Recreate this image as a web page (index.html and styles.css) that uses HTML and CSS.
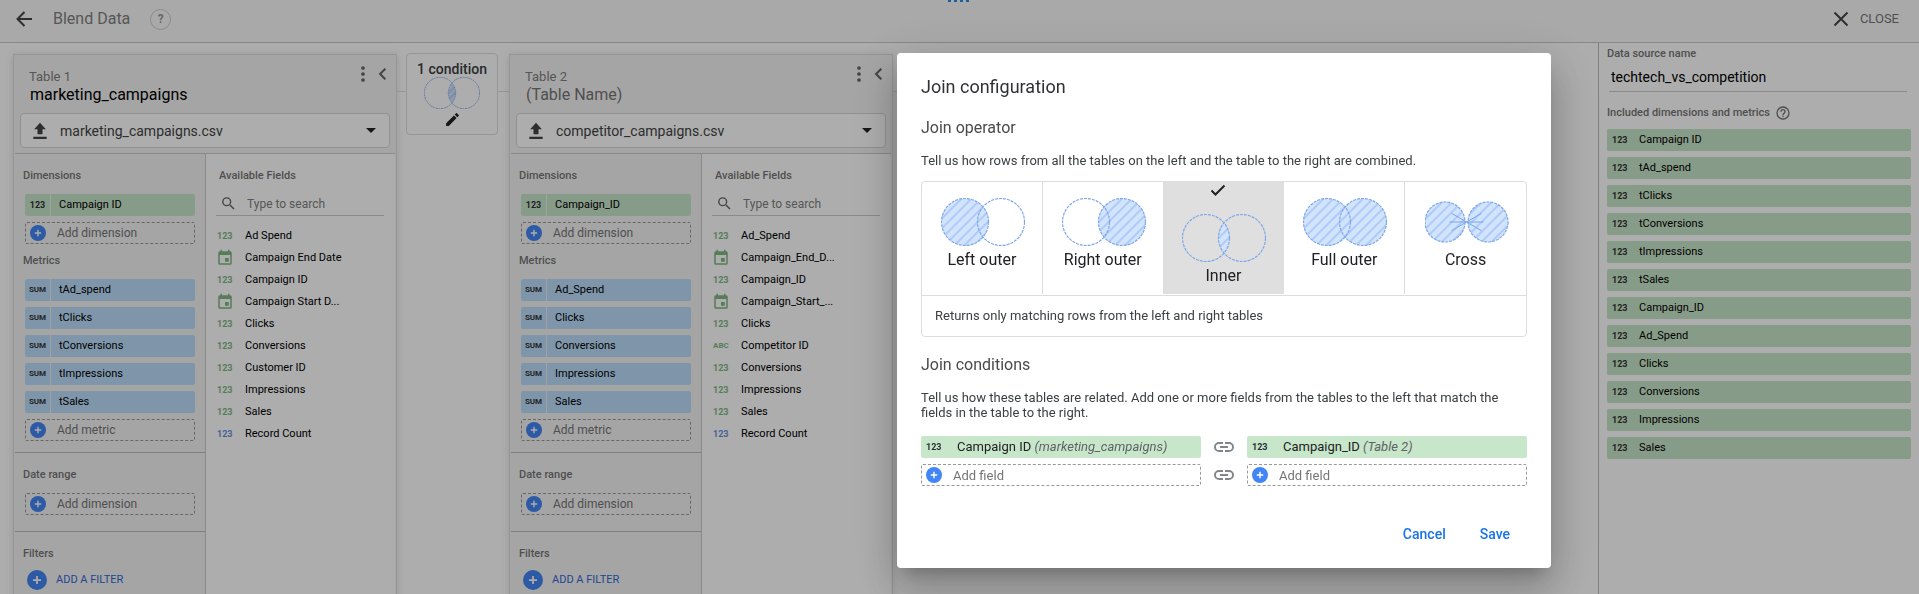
FILE: index.html
```
<!DOCTYPE html>
<html lang="en">
<head>
<meta charset="utf-8">
<meta name="viewport" content="width=device-width, initial-scale=1">
<title>Blend Data</title>
<link rel="stylesheet" href="styles.css">
</head>
<body>
<svg class="defs" aria-hidden="true">
  <defs>
    <pattern id="hatch" width="7" height="7" patternUnits="userSpaceOnUse" patternTransform="rotate(45)">
      <rect width="7" height="7" fill="#d2e3fc"/><rect width="2" height="7" fill="#aecbfa"/>
    </pattern>
    <clipPath id="lens"><circle cx="24" cy="24" r="23"/></clipPath>
    <symbol id="i-upload" viewBox="0 0 24 24"><path d="M9 16h6v-6h4l-7-8-7 8h4zM4 19h16v2.500H4z"/></symbol>
    <symbol id="i-more" viewBox="0 0 24 24"><circle cx="12" cy="3" r="2.800"/><circle cx="12" cy="12" r="2.800"/><circle cx="12" cy="21" r="2.800"/></symbol>
    <symbol id="i-chev" viewBox="0 0 24 24"><path d="M16 3 7 12l9 9" fill="none" stroke="currentColor" stroke-width="3.500"/></symbol>
    <symbol id="i-search" viewBox="0 0 24 24"><path d="M15.500 14h-.79l-.28-.27A6.470 6.470 0 0 0 16 9.500 6.500 6.500 0 1 0 9.500 16c1.610 0 3.090-.59 4.230-1.570l.27.28v.79l5 4.990L20.490 19zm-6 0a4.500 4.500 0 1 1 0-9 4.500 4.500 0 0 1 0 9z"/></symbol>
    <symbol id="i-event" viewBox="0 0 24 24"><path d="M17 12h-5v5h5zM16 1v2H8V1H6v2H5a2 2 0 0 0-2 2v14a2 2 0 0 0 2 2h14a2 2 0 0 0 2-2V5a2 2 0 0 0-2-2h-1V1zm3 18H5V8h14z"/></symbol>
    <symbol id="i-link" viewBox="0 0 24 24"><path d="M3.900 12A3.100 3.100 0 0 1 7 8.900h4V7H7a5 5 0 0 0 0 10h4v-1.900H7A3.100 3.100 0 0 1 3.900 12zM8 13h8v-2H8zm9-6h-4v1.900h4a3.100 3.100 0 0 1 0 6.200h-4V17h4a5 5 0 0 0 0-10z"/></symbol>
    <symbol id="i-edit" viewBox="0 0 24 24"><path d="M3 17.250V21h3.750L17.810 9.940l-3.750-3.750zM20.710 7.040a1 1 0 0 0 0-1.410l-2.340-2.340a1 1 0 0 0-1.410 0l-1.830 1.830 3.750 3.750z"/></symbol>
    <symbol id="i-plus" viewBox="0 0 16 16"><circle cx="8" cy="8" r="8" fill="#4285f4"/><path d="M8 4.800v6.400M4.800 8h6.400" stroke="#fff" stroke-width="1.400"/></symbol>
    <symbol id="v-inner" viewBox="0 0 84 48"><circle cx="60" cy="24" r="23" fill="url(#hatch)" clip-path="url(#lens)"/><g class="ring"><circle cx="24" cy="24" r="23.500"/><circle cx="60" cy="24" r="23.500"/></g></symbol>
  </defs>
</svg>

<header class="topbar">
  <button class="icon-btn" aria-label="Back"><svg class="back" viewBox="0 0 16 16"><path d="M16 8H1.500M8.500 1 1.500 8l7 7"/></svg></button>
  <h1>Blend Data</h1>
  <button class="help" aria-label="Help">?</button>
  <span class="dots" aria-hidden="true"><i></i><i></i><i></i><i></i></span>
  <button class="close"><svg viewBox="0 0 16 16"><path d="m1.500 1.500 13 13m0-13-13 13"/></svg>CLOSE</button>
</header>

<div class="body">
<main class="workspace">
  <section class="panel">
    <div class="panel-head">
      <div class="title">
        <label for="t1">Table 1</label>
        <input id="t1" class="name" value="marketing_campaigns">
      </div>
      <button class="icon-btn" aria-label="More"><svg class="more"><use href="#i-more"/></svg></button>
      <button class="icon-btn" aria-label="Collapse"><svg class="chev"><use href="#i-chev"/></svg></button>
    </div>
    <div class="source"><svg><use href="#i-upload"/></svg><select aria-label="Data source"><option>marketing_campaigns.csv</option></select></div>
    <div class="cols">
      <div class="used">
        <div class="group">
          <h2>Dimensions</h2>
          <button class="chip dim"><b>123</b><span>Campaign ID</span></button>
          <button class="add"><svg><use href="#i-plus"/></svg>Add dimension</button>
          <h2 class="second">Metrics</h2>
          <button class="chip met"><b>SUM</b><span>tAd_spend</span></button>
          <button class="chip met"><b>SUM</b><span>tClicks</span></button>
          <button class="chip met"><b>SUM</b><span>tConversions</span></button>
          <button class="chip met"><b>SUM</b><span>tImpressions</span></button>
          <button class="chip met"><b>SUM</b><span>tSales</span></button>
          <button class="add"><svg><use href="#i-plus"/></svg>Add metric</button>
        </div>
        <div class="group date">
          <h2>Date range</h2>
          <button class="add"><svg><use href="#i-plus"/></svg>Add dimension</button>
        </div>
        <div class="group">
          <h2>Filters</h2>
          <button class="filter"><svg><use href="#i-plus"/></svg>ADD A FILTER</button>
        </div>
      </div>
      <div class="available">
        <h2>Available Fields</h2>
        <div class="search"><svg><use href="#i-search"/></svg><input aria-label="Search fields" placeholder="Type to search"></div>
        <ul>
          <li><b>123</b><span>Ad Spend</span></li>
          <li><svg><use href="#i-event"/></svg><span>Campaign End Date</span></li>
          <li><b>123</b><span>Campaign ID</span></li>
          <li><svg><use href="#i-event"/></svg><span>Campaign Start D...</span></li>
          <li><b>123</b><span>Clicks</span></li>
          <li><b>123</b><span>Conversions</span></li>
          <li><b>123</b><span>Customer ID</span></li>
          <li><b>123</b><span>Impressions</span></li>
          <li><b>123</b><span>Sales</span></li>
          <li class="count"><b>123</b><span>Record Count</span></li>
        </ul>
      </div>
    </div>
  </section>

  <div class="joint"><button class="join-card">1 condition<svg class="venn"><use href="#v-inner"/></svg><svg class="edit"><use href="#i-edit"/></svg></button></div>

  <section class="panel">
    <div class="panel-head">
      <div class="title">
        <label for="t2">Table 2</label>
        <input id="t2" class="name" placeholder="(Table Name)">
      </div>
      <button class="icon-btn" aria-label="More"><svg class="more"><use href="#i-more"/></svg></button>
      <button class="icon-btn" aria-label="Collapse"><svg class="chev"><use href="#i-chev"/></svg></button>
    </div>
    <div class="source"><svg><use href="#i-upload"/></svg><select aria-label="Data source"><option>competitor_campaigns.csv</option></select></div>
    <div class="cols">
      <div class="used">
        <div class="group">
          <h2>Dimensions</h2>
          <button class="chip dim"><b>123</b><span>Campaign_ID</span></button>
          <button class="add"><svg><use href="#i-plus"/></svg>Add dimension</button>
          <h2 class="second">Metrics</h2>
          <button class="chip met"><b>SUM</b><span>Ad_Spend</span></button>
          <button class="chip met"><b>SUM</b><span>Clicks</span></button>
          <button class="chip met"><b>SUM</b><span>Conversions</span></button>
          <button class="chip met"><b>SUM</b><span>Impressions</span></button>
          <button class="chip met"><b>SUM</b><span>Sales</span></button>
          <button class="add"><svg><use href="#i-plus"/></svg>Add metric</button>
        </div>
        <div class="group date">
          <h2>Date range</h2>
          <button class="add"><svg><use href="#i-plus"/></svg>Add dimension</button>
        </div>
        <div class="group">
          <h2>Filters</h2>
          <button class="filter"><svg><use href="#i-plus"/></svg>ADD A FILTER</button>
        </div>
      </div>
      <div class="available">
        <h2>Available Fields</h2>
        <div class="search"><svg><use href="#i-search"/></svg><input aria-label="Search fields" placeholder="Type to search"></div>
        <ul>
          <li><b>123</b><span>Ad_Spend</span></li>
          <li><svg><use href="#i-event"/></svg><span>Campaign_End_D...</span></li>
          <li><b>123</b><span>Campaign_ID</span></li>
          <li><svg><use href="#i-event"/></svg><span>Campaign_Start_...</span></li>
          <li><b>123</b><span>Clicks</span></li>
          <li class="text"><b>ABC</b><span>Competitor ID</span></li>
          <li><b>123</b><span>Conversions</span></li>
          <li><b>123</b><span>Impressions</span></li>
          <li><b>123</b><span>Sales</span></li>
          <li class="count"><b>123</b><span>Record Count</span></li>
        </ul>
      </div>
    </div>
  </section>
  <div class="joint"></div>
</main>

<aside class="sidebar">
  <label for="dsn">Data source name</label>
  <input id="dsn" value="techtech_vs_competition">
  <h2>Included dimensions and metrics <svg viewBox="0 0 24 24"><path d="M11 18h2v-2h-2zm1-16a10 10 0 1 0 0 20 10 10 0 0 0 0-20zm0 18a8 8 0 1 1 0-16 8 8 0 0 1 0 16zm0-14a4 4 0 0 0-4 4h2a2 2 0 1 1 4 0c0 2-3 1.750-3 5h2c0-2.250 3-2.500 3-5a4 4 0 0 0-4-4z"/></svg></h2>
  <ul>
    <li><b>123</b>Campaign ID</li>
    <li><b>123</b>tAd_spend</li>
    <li><b>123</b>tClicks</li>
    <li><b>123</b>tConversions</li>
    <li><b>123</b>tImpressions</li>
    <li><b>123</b>tSales</li>
    <li><b>123</b>Campaign_ID</li>
    <li><b>123</b>Ad_Spend</li>
    <li><b>123</b>Clicks</li>
    <li><b>123</b>Conversions</li>
    <li><b>123</b>Impressions</li>
    <li><b>123</b>Sales</li>
  </ul>
</aside>
</div>

<div class="scrim">
<div class="dialog" role="dialog" aria-modal="true" aria-labelledby="dlg">
  <h2 id="dlg">Join configuration</h2>
  <h3>Join operator</h3>
  <p>Tell us how rows from all the tables on the left and the table to the right are combined.</p>
  <fieldset class="operators" aria-label="Join operator">
    <div class="options">
      <label><input type="radio" name="op"><svg class="venn" viewBox="0 0 84 48"><circle cx="24" cy="24" r="23.500" fill="url(#hatch)"/><g class="ring"><circle cx="24" cy="24" r="23.500"/><circle cx="60" cy="24" r="23.500"/></g></svg>Left outer</label>
      <label><input type="radio" name="op"><svg class="venn" viewBox="0 0 84 48"><circle cx="60" cy="24" r="23.500" fill="url(#hatch)"/><g class="ring"><circle cx="24" cy="24" r="23.500"/><circle cx="60" cy="24" r="23.500"/></g></svg>Right outer</label>
      <label class="on"><input type="radio" name="op" checked><svg class="check" viewBox="0 0 16 16"><path d="m1.500 8.500 4 4 9-9"/></svg><svg class="venn"><use href="#v-inner"/></svg>Inner</label>
      <label><input type="radio" name="op"><svg class="venn" viewBox="0 0 84 48"><g fill="url(#hatch)"><circle cx="24" cy="24" r="23.500"/><circle cx="60" cy="24" r="23.500"/></g><g class="ring"><circle cx="24" cy="24" r="23.500"/><circle cx="60" cy="24" r="23.500"/></g></svg>Full outer</label>
      <label><input type="radio" name="op"><svg class="venn" viewBox="0 0 84 48"><g fill="url(#hatch)"><circle cx="20" cy="24" r="20"/><circle cx="63" cy="24" r="20"/></g><g class="ring"><circle cx="20" cy="24" r="20"/><circle cx="63" cy="24" r="20"/></g><path d="M24.500 24h34M26.500 15.300l30 17.400M56.500 15.300l-30 17.400" stroke="#7da7e8" fill="none"/></svg>Cross</label>
    </div>
    <p class="explain">Returns only matching rows from the left and right tables</p>
  </fieldset>
  <h3>Join conditions</h3>
  <p>Tell us how these tables are related. Add one or more fields from the tables to the left that match the fields in the table to the right.</p>
  <div class="conditions">
    <button class="field"><b>123</b><span>Campaign ID <em>(marketing_campaigns)</em></span></button>
    <svg class="link"><use href="#i-link"/></svg>
    <button class="field"><b>123</b><span>Campaign_ID <em>(Table 2)</em></span></button>
    <button class="add"><svg><use href="#i-plus"/></svg>Add field</button>
    <svg class="link"><use href="#i-link"/></svg>
    <button class="add"><svg><use href="#i-plus"/></svg>Add field</button>
  </div>
  <div class="actions"><button>Cancel</button><button>Save</button></div>
</div>
</div>
</body>
</html>
```
FILE: styles.css
```
* { box-sizing: border-box; }
body { margin: 0; height: 100vh; overflow: hidden; display: flex; flex-direction: column; font: 12px/16px Roboto, sans-serif; color: #000; background: #fff; }
h1, h2, h3, p, ul, fieldset { margin: 0; padding: 0; border: 0; font-weight: 400; list-style: none; min-width: 0; }
button, input, select { font: inherit; color: inherit; background: none; border: 0; padding: 0; margin: 0; outline: 0; }
svg { display: block; flex: none; fill: currentColor; }
.defs { position: absolute; width: 0; height: 0; }
h2 { font-size: 11px; line-height: 16px; font-weight: 500; color: #757575; }

.topbar { position: relative; flex: none; display: flex; align-items: center; height: 43px; padding: 0 20px 4px 16px; border-bottom: 1px solid #c8c8c8; background: #fafafa; }
.topbar h1 { margin-left: 21px; font-size: 16px; color: #808080; }
.back { width: 16px; height: 16px; fill: none; stroke: #444; stroke-width: 2; }
.help { width: 21px; height: 21px; margin-left: 20px; border: 1px solid #ccc; border-radius: 50%; color: #999; font-weight: 700; line-height: 18px; }
.dots { position: absolute; top: 0; left: 50%; display: flex; gap: 3px; margin-left: -12px; }
.dots i { width: 3px; height: 2px; background: #2b8bea; }
.close { display: flex; align-items: center; gap: 11px; margin-left: auto; font-size: 13px; color: #757575; }
.close svg { width: 16px; height: 16px; fill: none; stroke: #444; stroke-width: 2; }

.body { flex: 1; display: flex; min-height: 0; }
.workspace { flex: 1; display: flex; align-items: flex-start; min-width: 0; overflow: hidden; padding: 11px 0 0 13px; }
.panel { flex: none; width: 384px; min-height: 100%; display: flex; flex-direction: column; padding: 0 1px; border: 1px solid #ddd; background: #f4f4f4; box-shadow: 0 1px 8px rgba(0,0,0,.12); }
.panel-head { display: flex; align-items: flex-start; height: 58px; padding: 11px 4px 0 14px; color: #666; }
.title { flex: 1; display: flex; flex-direction: column; padding-top: 3px; }
.title label { font-size: 13px; line-height: 15px; color: #808080; }
.name { width: 100%; height: 20px; padding-left: 1px; font-size: 16px; color: #000; }
.name::placeholder { color: #757575; }
.more { width: 16px; height: 16px; }
.chev { width: 16px; height: 14px; margin: 1px 0 0 4px; }
.source { display: flex; align-items: center; height: 35px; margin: 0 5px 5px; padding: 0 13px 0 9px; border: 1px solid #d5d5d5; border-radius: 4px; background: #fff; color: #444; }
.source svg { width: 20px; height: 20px; }
.source select { flex: 1; margin-left: 10px; appearance: none; font-size: 14px; }
.source::after { content: ""; border: 5px solid transparent; border-top-color: #222; border-bottom: 0; }
.cols { flex: 1; display: grid; grid-template-columns: 191px minmax(0, 1fr); border-top: 1px solid #ccc; }
.used { border-right: 1px solid #ccc; }
.group { display: flex; flex-direction: column; gap: 6px; padding: 14px 10px 11px; border-bottom: 1px solid #bbb; }
.group + .group { padding-bottom: 16px; }
.group:last-child { border: 0; }
.group h2 { margin: 0 -2px 4px; }
.group .second { margin: 3px -2px 4px; }
.chip { display: flex; align-items: stretch; height: 22px; border-radius: 2px; text-align: left; font-size: 11px; line-height: 21px; overflow: hidden; }
.chip b { width: 26px; flex: none; border-right: 1px solid #eee; text-align: center; font-size: 9px; line-height: 22px; color: #333; }
.chip span { padding-left: 8px; }
.dim { background: #c8e6c9; }
.met { background: #bbdefb; }
.met b { font-size: 8px; }
.add { display: flex; align-items: center; gap: 11px; height: 22px; padding-left: 4px; border: 1px dashed #999; border-radius: 2px; color: #757575; }
.add svg { width: 16px; height: 16px; }
.filter { display: flex; align-items: center; gap: 9px; margin: -2px 0 0 2px; font-size: 11px; color: #3367d6; }
.filter svg { width: 20px; height: 20px; }

.available { padding: 14px 11px 0 10px; background: #fff; }
.available h2 { padding-left: 3px; }
.search { display: flex; align-items: center; height: 32px; padding-left: 4px; border-bottom: 1px solid #ccc; color: #666; }
.search svg { width: 17px; height: 17px; margin-top: 8px; }
.search input { flex: 1; min-width: 0; margin: 8px 0 0 10px; }
.search input::placeholder { color: #808080; }
.available ul { padding-top: 9px; font-size: 11px; }
.available li { display: grid; grid-template-columns: 29px 1fr; align-items: center; height: 22px; white-space: nowrap; }
.available li b { padding-left: 1px; font-size: 9px; color: #81b784; }
.available li.text b { font-size: 8px; }
.available li svg { width: 18px; height: 18px; color: #81b784; }
.available .count b { color: #6b93dd; }

.joint { flex: none; width: 112px; height: 81px; display: flex; justify-content: center; padding-right: 2px; background: linear-gradient(#ddd, #ddd) 0 37px / 100% 1px no-repeat; }
.join-card { width: 92px; height: 82px; margin-top: -1px; display: flex; flex-direction: column; align-items: center; border: 1px solid #ddd; border-radius: 4px; background: #fff; font: 500 14px/16px Roboto, sans-serif; padding-top: 7px; color: #3c4043; }
.join-card .venn { width: 56px; height: 32px; margin: 0; }
.join-card .edit { width: 17px; height: 17px; margin-top: 2px; color: #222; }
.ring { fill: none; stroke: #7da7e8; stroke-width: 1.200; stroke-dasharray: 3 1; }

.sidebar { flex: none; width: 321px; padding: 2px 8px 0; border-left: 1px solid #bbb; }
.sidebar label { display: block; font-size: 11px; font-weight: 500; color: #757575; line-height: 17px; }
.sidebar input { display: block; width: calc(100% - 6px); height: 30px; margin-left: 2px; padding-left: 2px; border-bottom: 1px solid #ccc; font-size: 14px; }
.sidebar h2 { display: flex; align-items: center; gap: 5px; height: 16px; margin: 13px 0 8px; }
.sidebar h2 svg { width: 16px; height: 16px; }
.sidebar ul { display: grid; gap: 6px; font-size: 11px; }
.sidebar li { display: flex; height: 22px; line-height: 21px; border-radius: 2px; background: #c8e6c9; }
.sidebar li b { width: 32px; padding-left: 5px; font-size: 9px; line-height: 23px; color: #333; }

.scrim { position: fixed; inset: 0; background: rgba(0,0,0,.32); }
.dialog { position: absolute; top: 53px; left: 897px; width: 654px; padding: 24px 24px 16px; border-radius: 4px; background: #fff; color: #3c4043; font-size: 13px; line-height: 15px; box-shadow: 0 11px 15px -7px rgba(0,0,0,.2), 0 24px 38px 3px rgba(0,0,0,.14), 0 9px 46px 8px rgba(0,0,0,.12); }
.dialog h2 { font-weight: 400; font-size: 18px; line-height: 20px; color: #303134; }
.dialog h3 { margin: 21px 0 15px; font-size: 16px; line-height: 20px; color: #4a4a4a; }
.operators { margin: 13px 0 0; border: 1px solid #ddd; border-radius: 4px; }
.dialog .operators + h3 { margin-top: 18px; }
.options { display: grid; grid-template-columns: repeat(5, 1fr); border-bottom: 1px solid #ddd; padding-bottom: 1px; }
.options label { display: flex; flex-direction: column; align-items: center; height: 112px; padding-top: 16px; border-right: 1px solid #ddd; font-size: 16px; line-height: 20px; color: #202124; }
.options label:last-child { border-right: 0; }
.options input { position: absolute; opacity: 0; }
.options .on { padding-top: 0; border-color: #dfdfdf; background: #dfdfdf; }
.check { width: 16px; height: 16px; margin-right: 11px; fill: none; stroke: #202124; stroke-width: 2; }
.options .on .venn { margin-top: 16px; }
.venn { width: 84px; height: 48px; margin-bottom: 4px; }
.options .venn { margin-left: 2px; }
.explain { padding: 12px 13px 13px; }
.conditions { display: grid; grid-template-columns: 1fr 24px 1fr; column-gap: 11px; row-gap: 6px; margin-top: 16px; align-items: center; }
.field { display: flex; height: 22px; border-radius: 2px; background: #c8e6c9; text-align: left; line-height: 21px; color: #202124; }
.field b { width: 36px; padding-left: 5px; font-size: 9px; line-height: 23px; color: #263238; }
.field em { color: #5f6368; }
.link { width: 24px; height: 24px; margin: -3px 0; color: #80868b; }
.actions { display: flex; justify-content: flex-end; margin-top: 30px; }
.actions button { height: 36px; padding: 0 17px; font: 500 14px/20px Roboto, sans-serif; color: #1a73e8; }
```
